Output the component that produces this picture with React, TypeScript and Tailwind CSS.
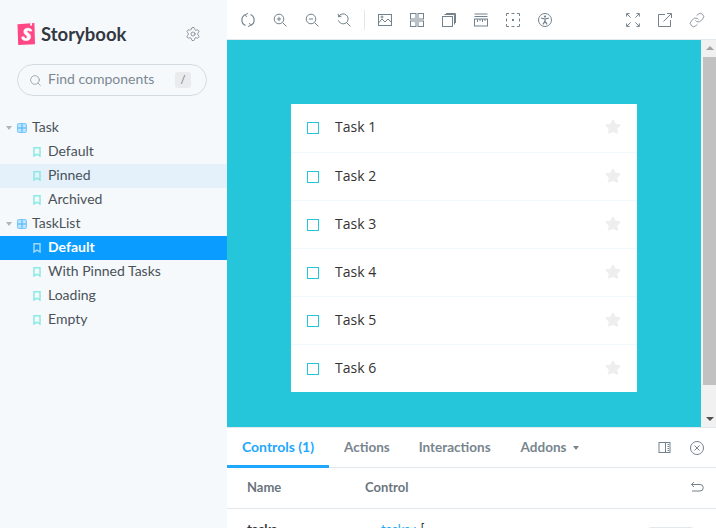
import React from "react";
import { Search, Settings, Link, Star } from "lucide-react";

const stories = [
  { name: "Task", kind: "group" },
  { name: "Default", kind: "story" },
  { name: "Pinned", kind: "story", hover: true },
  { name: "Archived", kind: "story" },
  { name: "TaskList", kind: "group" },
  { name: "Default", kind: "story", active: true },
  { name: "With Pinned Tasks", kind: "story" },
  { name: "Loading", kind: "story" },
  { name: "Empty", kind: "story" },
];

const tasks = ["Task 1", "Task 2", "Task 3", "Task 4", "Task 5", "Task 6"];

function Icon({ children, className = "" }: { children: React.ReactNode; className?: string }) {
  return (
    <svg
      width="14"
      height="14"
      viewBox="0 0 14 14"
      fill="none"
      stroke="#73828c"
      strokeWidth="1"
      className={"shrink-0 " + className}
    >
      {children}
    </svg>
  );
}

function Logo() {
  return (
    <svg width="18" height="22" viewBox="0 0 18 22" className="shrink-0">
      <path d="M0.5 1.2 L17.4 0 L18 21.2 L1.2 22 Z" fill="#ff4785" />
      <path d="M13.3 0.3 L13.2 3 L14.2 2.3 L15.1 3 L15 0.1 Z" fill="#fff" />
      <path
        d="M12.4 8.1 C12.4 7.5 9.9 7.2 9.9 8.2 C9.9 10 13.6 10.2 13.6 13.7 C13.6 16.4 11.4 17.6 9 17.6 C6.6 17.6 4.6 16.6 4.7 14 C4.7 13.6 7.4 13.6 7.5 14 C7.4 15.1 7.8 15.4 8.9 15.4 C9.8 15.4 10.3 14.9 10.3 14.1 C10.3 12.1 6.8 12 6.8 8.5 C6.8 6.5 8.4 5.2 10 5.2 C11.8 5.1 14.9 5.4 14.9 8.1 Z"
        fill="#fff"
        stroke="#fff"
        strokeWidth="0.6"
      />
    </svg>
  );
}

function SidebarRow({ item }: { item: (typeof stories)[number] }) {
  if (item.kind === "group") {
    return (
      <div className="flex h-6 items-center pl-[6px] text-[14px] text-[#4a5259]">
        <span className="h-0 w-0 border-x-[3px] border-t-[4px] border-x-transparent border-t-[#b0b5ba]" />
        <svg width="10" height="10" viewBox="0 0 10 10" className="ml-[5px] mr-[5px] shrink-0">
          <rect x="0.5" y="0.5" width="9" height="9" rx="1.5" fill="#bfe4ff" stroke="#7cc8fb" strokeWidth="1" />
          <path d="M5 0.5 V9.5 M0.5 5 H9.5" stroke="#45b5fb" strokeWidth="1" />
        </svg>
        <span className="mb-[4px]">{item.name}</span>
      </div>
    );
  }
  return (
    <div
      className={
        "flex h-6 items-center pl-[33px] text-[14px] " +
        (item.active
          ? "bg-[#0b9cff] font-bold text-white"
          : item.hover
            ? "bg-[#e4f1fb] text-[#4a5259]"
            : "text-[#4a5259]")
      }
    >
      <svg width="8" height="10" viewBox="0 0 8 10" className="mr-[7px] shrink-0">
        <path
          d="M1 0.75 H7 V9 L4 7.2 L1 9 Z"
          fill="none"
          stroke={item.active ? "#9fd6ff" : "#8ce8e2"}
          strokeWidth="1.5"
        />
      </svg>
      <span className="mb-[4px]">{item.name}</span>
    </div>
  );
}

function Sidebar() {
  return (
    <aside className="flex h-full w-[227px] shrink-0 flex-col bg-[#f6f9fc]">
      <div className="flex h-[64px] items-start pl-[17px] pr-[26px] pt-[23px]">
        <Logo />
        <span className="ml-[6px] text-[18.5px] font-bold leading-[22px] text-[#333840]">Storybook</span>
        <Settings size={16} strokeWidth={1} color="#5f6b75" className="ml-auto mt-[3px]" />
      </div>
      <div className="ml-[17px] flex h-[32px] w-[190px] shrink-0 items-center rounded-full border border-[#d3dbe2] pl-[11px] pr-[15px] text-[14px] text-[#7d8890]">
        <Search size={13} strokeWidth={1.2} color="#78858e" />
        <span className="mb-[3px] ml-[6px]">Find components</span>
        <span className="ml-auto flex h-[16px] w-[16px] items-center justify-center rounded-[3px] bg-[#e9ebed] text-[11px] text-[#6c7780]">
          /
        </span>
      </div>
      <div className="mt-[20px]">
        {stories.map((item, i) => (
          <SidebarRow key={i} item={item} />
        ))}
      </div>
    </aside>
  );
}

function Toolbar() {
  return (
    <div className="flex h-10 shrink-0 items-center border-b border-[#e3e8ec] bg-white pl-[14px] pr-[12px]">
      <div className="flex items-center gap-[18px]">
        <Icon>
          <path d="M4.5 1.5 A6 6 0 0 0 4.5 12.5 M9.5 12.5 A6 6 0 0 0 9.5 1.5" strokeWidth="1.2" />
          <path d="M7 0.4 L4.4 1.6 L5.6 4 M7 13.6 L9.6 12.4 L8.4 10" />
        </Icon>
        <Icon>
          <circle cx="6" cy="6" r="4.8" />
          <path d="M9.6 9.6 L13.4 13.4" />
          <path d="M3.8 6 H8.2 M6 3.8 V8.2" />
        </Icon>
        <Icon>
          <circle cx="6" cy="6" r="4.8" />
          <path d="M9.6 9.6 L13.4 13.4" />
          <path d="M3.8 6 H8.2" />
        </Icon>
        <Icon>
          <path d="M1.6 3.8 A5 5 0 1 1 1.4 7.4" />
          <path d="M1.2 0.8 L1.6 3.8 L4.4 3.2" />
          <path d="M9.6 9.6 L13.4 13.4" />
        </Icon>
      </div>
      <span className="mx-[13px] h-[20px] w-px bg-[#e3e8ec]" />
      <div className="flex items-center gap-[18px]">
        <Icon>
          <rect x="0.5" y="1.5" width="13" height="11" />
          <path d="M0.5 10 L4 6 L7 9 L10 6 L13.5 9.5" />
          <circle cx="4" cy="4" r="1" />
        </Icon>
        <Icon>
          <rect x="0.5" y="0.5" width="5.5" height="5.5" />
          <rect x="8" y="0.5" width="5.5" height="5.5" />
          <rect x="0.5" y="8" width="5.5" height="5.5" />
          <rect x="8" y="8" width="5.5" height="5.5" />
          <rect x="4.5" y="4.5" width="5" height="5" fill="#b9c1c7" stroke="none" />
        </Icon>
        <Icon>
          <rect x="0.5" y="3.5" width="10" height="10" />
          <path d="M2.5 1.5 H12.5 V11.5 M4 0.5 H13.5 V10" />
        </Icon>
        <Icon>
          <path d="M0.5 1 H13.5 M0.5 3.5 H13.5" />
          <rect x="0.5" y="6" width="13" height="7" />
          <path d="M3.5 6 V9 M6 6 V8 M8.5 6 V9 M11 6 V8" />
        </Icon>
        <Icon>
          <path d="M0.5 3 V0.5 H3 M5.5 0.5 H8.5 M11 0.5 H13.5 V3 M13.5 5.5 V8.5 M13.5 11 V13.5 H11 M8.5 13.5 H5.5 M3 13.5 H0.5 V11 M0.5 8.5 V5.5" />
          <rect x="6" y="6" width="2" height="2" fill="#73828c" stroke="none" />
        </Icon>
        <Icon>
          <circle cx="7" cy="7" r="6.5" />
          <circle cx="7" cy="3.6" r="1.1" fill="#73828c" stroke="none" />
          <path d="M3.2 5.2 L7 6 L10.8 5.2 M7 6 V8 L5 11.4 M7 8 L9 11.4" strokeWidth="1.2" />
        </Icon>
      </div>
      <div className="ml-auto flex items-center gap-[18px]">
        <Icon>
          <path d="M0.8 0.8 L4.6 4.6 M13.2 0.8 L9.4 4.6 M0.8 13.2 L4.6 9.4 M13.2 13.2 L9.4 9.4" />
          <path d="M0.6 3.6 V0.6 H3.6 M10.4 0.6 H13.4 V3.6 M0.6 10.4 V13.4 H3.6 M10.4 13.4 H13.4 V10.4" />
        </Icon>
        <Icon>
          <path d="M7 1.5 H0.5 V13.5 H12.5 V7" />
          <path d="M5.5 8.5 L13 1 M9 0.5 H13.5 V5" />
        </Icon>
        <Link size={16} strokeWidth={1.2} color="#73828c" className="-mx-px" />
      </div>
    </div>
  );
}

function Canvas() {
  return (
    <div className="flex min-h-0 flex-1">
      <div className="flex-1 bg-[#26c6da] pl-[64px] pt-[64px]">
        <div className="w-[346px] bg-white" style={{ fontFamily: '"Open Sans", sans-serif' }}>
          {tasks.map((task, i) => (
            <div
              key={task}
              className={
                "flex h-[48px] items-center px-[16px] text-[14px] text-[#333] " +
                (i > 0 ? "border-t border-[#f0f9fb]" : "")
              }
            >
              <span className="h-3 w-3 border border-[#26c6da]" />
              <span className="mb-[3px] ml-[16px]">{task}</span>
              <Star size={16} fill="#eeeeee" color="#eeeeee" className="mb-[2px] ml-auto" />
            </div>
          ))}
        </div>
      </div>
      <div className="flex w-[15px] shrink-0 flex-col items-center bg-[#f1f1f1] pl-[2px]">
        <span className="mt-[6px] h-0 w-0 border-x-[4px] border-b-[4px] border-x-transparent border-b-[#a3a3a3]" />
        <span className="mt-[7px] h-[328px] w-full bg-[#c1c1c1]" />
        <span className="mb-[6px] mt-auto h-0 w-0 border-x-[4px] border-t-[4px] border-x-transparent border-t-[#505050]" />
      </div>
    </div>
  );
}

function Panel() {
  return (
    <div className="h-[101px] shrink-0 overflow-hidden border-t border-[#e3e8ec] bg-white">
      <div className="flex h-[40px] items-stretch border-b border-[#e3e8ec] text-[13.5px] font-bold text-[#78858e]">
        <div className="-mb-px flex w-[102px] items-center justify-center border-b-[3px] border-[#1ea7fd] text-[14px] text-[#1ea7fd]">
          Controls (1)
        </div>
        <div className="ml-[15px] flex items-center">Actions</div>
        <div className="ml-[29px] flex items-center">Interactions</div>
        <div className="ml-[30px] flex items-center">
          Addons
          <span className="ml-[7px] h-0 w-0 border-x-[3.5px] border-t-[4px] border-x-transparent border-t-[#78858e]" />
        </div>
        <div className="ml-auto flex items-center gap-[18px] pr-[12px]">
          <Icon>
            <rect x="1" y="1.5" width="11" height="10" />
            <path d="M7.5 1.5 V11.5 M9.5 3.5 H11 M9.5 5.5 H11 M9.5 7.5 H11 M9.5 9.5 H11" />
          </Icon>
          <Icon>
            <circle cx="7" cy="7" r="6.5" />
            <path d="M4.5 4.5 L9.5 9.5 M9.5 4.5 L4.5 9.5" />
          </Icon>
        </div>
      </div>
      <div className="flex h-[41px] items-center border-b border-[#e3e8ec] pl-[20px] pr-[12px] text-[13px] font-bold text-[#6b757d]">
        <span className="w-[118px]">Name</span>
        <span>Control</span>
        <Icon className="ml-auto">
          <path d="M1.5 3.5 H10 A3 3 0 0 1 10 10 H2" />
          <path d="M4 1 L1.5 3.5 L4 6" />
        </Icon>
      </div>
      <div className="flex h-[24px] items-start pl-[20px] pt-[11px] text-[13px] leading-[18px]">
        <span className="w-[134px] font-bold text-[#333]">tasks</span>
        <span className="text-[#1ea7fd]">tasks :</span>
        <span className="ml-[4px] text-[#333]">[</span>
        <span className="ml-[222px] mt-[7px] h-5 w-[48px] rounded border border-[#e3e8ec]" />
      </div>
    </div>
  );
}

export default function App() {
  return (
    <div
      className="flex h-[528px] w-[716px] overflow-hidden bg-white"
      style={{ fontFamily: 'Lato, "Open Sans", sans-serif' }}
    >
      <Sidebar />
      <main className="flex min-w-0 flex-1 flex-col">
        <Toolbar />
        <Canvas />
        <Panel />
      </main>
    </div>
  );
}
